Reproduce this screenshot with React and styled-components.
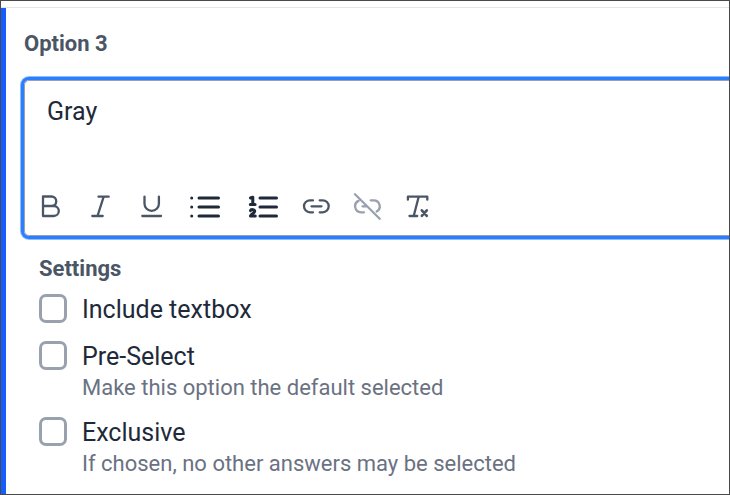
import React, { useState } from "react";
import styled, { createGlobalStyle } from "styled-components";

const settings = [
  { id: "textbox", title: "Include textbox" },
  {
    id: "preselect",
    title: "Pre-Select",
    hint: "Make this option the default selected",
  },
  {
    id: "exclusive",
    title: "Exclusive",
    hint: "If chosen, no other answers may be selected",
  },
];

const tools = [
  {
    label: "Bold",
    icon: (
      <path d="M9 4.5h8.5a4.7 4.7 0 0 1 0 9.5H9M17.5 14h2.3a5 5 0 0 1 0 10H9V4.5" />
    ),
  },
  {
    label: "Italic",
    icon: <path d="M13.5 4.7h10.2M7.3 24h10.4M18.7 4.7L12.5 24" />,
  },
  {
    label: "Underline",
    icon: <path d="M8.5 4.7v7a7.2 7.2 0 0 0 14.4 0v-7M6.3 24h18.7" />,
  },
  {
    label: "Bulleted list",
    wide: true,
    icon: (
      <path
        strokeWidth="3"
        d="M12 6h19.5M12 15h19.5M12 24h19.5M4.7 6h0M4.7 15h0M4.7 24h0"
      />
    ),
  },
  {
    label: "Numbered list",
    wide: true,
    icon: (
      <>
        <path strokeWidth="3" d="M16 6h16.5M16 15h16.5M16 24h16.5" />
        <path
          d="M6.5 6l2.3-.8v7M6.3 12.5h4.8M6.5 18.7c.4-1.6 4.4-1.4 4.2.6-.2 1.7-3.6 2.5-4.2 4.7h4.8"
          strokeWidth="3"
        />
      </>
    ),
  },
  {
    label: "Insert link",
    icon: (
      <path d="M12 8.3H9a6 6 0 0 0 0 12h3M18.7 8.3h3a6 6 0 0 1 0 12h-3M10.5 14.3h10" />
    ),
  },
  {
    label: "Remove link",
    disabled: true,
    icon: (
      <path d="M3 2.3L27.7 26.8M6.5 8.9a6 6 0 0 0 2.5 11.4h3M18.7 8.3h3a6 6 0 0 1 3 11.2M10.5 14.3h4" />
    ),
  },
  {
    label: "Clear formatting",
    icon: (
      <>
        <path d="M4.9 7.7V4.7h19.4v3M15.7 4.7L10.7 24M6.5 24h7.7" />
        <path
          d="M18.8 18.3l5 5.5M23.8 18.3l-5 5.5"
          strokeWidth="2.6"
        />
      </>
    ),
  },
];

const App = () => {
  const [text, setText] = useState("Gray");

  return (
    <Frame>
      <GlobalStyle />
      <Card>
        <Panel>
          <Label htmlFor="option-text">Option 3</Label>
          <Editor>
            <TextArea
              id="option-text"
              value={text}
              onChange={(e) => setText(e.target.value)}
            />
            <Toolbar>
              {tools.map((tool) => (
                <Tool
                  key={tool.label}
                  type="button"
                  aria-label={tool.label}
                  disabled={tool.disabled}
                  $wide={tool.wide}
                >
                  <svg
                    width={tool.wide ? 36 : 30}
                    height="30"
                    fill="none"
                    stroke="currentColor"
                    strokeWidth="2.3"
                    strokeLinecap="round"
                    strokeLinejoin="round"
                  >
                    {tool.icon}
                  </svg>
                </Tool>
              ))}
            </Toolbar>
          </Editor>
          <Settings>
            <Legend>Settings</Legend>
            <Options>
              {settings.map(({ id, title, hint }) => (
                <Option key={id} htmlFor={id}>
                  <Checkbox id={id} type="checkbox" />
                  <span>
                    <Title>{title}</Title>
                    {hint && <Hint>{hint}</Hint>}
                  </span>
                </Option>
              ))}
            </Options>
          </Settings>
        </Panel>
      </Card>
    </Frame>
  );
};

export default App;

const GlobalStyle = createGlobalStyle`
  * {
    box-sizing: border-box;
  }
  body {
    margin: 0;
    background: #fff;
    font-family: Roboto, sans-serif;
  }
`;

const Frame = styled.div`
  display: flex;
  flex-direction: column;
  min-height: 100vh;
  padding-top: 6px;
  border: 1px solid #4a4a4a;
  overflow: hidden;
`;

const Card = styled.div`
  display: flex;
  flex: 1;
  border-top: 1px solid #e5e5e5;
`;

const Panel = styled.div`
  flex: 1;
  padding: 22px 0 8px 18px;
  border-left: 5px solid #155dfc;
`;

const Label = styled.label`
  display: block;
  font-size: 22px;
  font-weight: 700;
  line-height: 28px;
  color: #4a5565;
`;

const Editor = styled.div`
  margin-top: 22px;
  margin-right: -16px;
  border: 1px solid #99a1af;
  border-radius: 5px;
  box-shadow: 0 0 0 3px #2b7fff, 0 0 0 4px #8fbcff;
`;

const TextArea = styled.textarea`
  display: block;
  width: 100%;
  height: 104px;
  padding: 14px 22px;
  border: 0;
  outline: 0;
  resize: none;
  background: transparent;
  font-family: inherit;
  font-size: 25px;
  line-height: 33px;
  color: #1e2939;
`;

const Toolbar = styled.div`
  display: flex;
  gap: 21px;
  padding: 7px 9px 13px;
`;

const Tool = styled.button`
  display: flex;
  padding: 0;
  border: 0;
  background: none;
  color: ${({ $wide }) => ($wide ? "#1e2939" : "#4a5565")};
  cursor: pointer;

  &:disabled {
    color: #99a1af;
    cursor: default;
  }
`;

const Settings = styled.fieldset`
  margin: 0;
  padding: 19px 0 0 15px;
  border: 0;
`;

const Legend = styled.legend`
  float: left;
  padding: 0;
  font-size: 22px;
  font-weight: 700;
  line-height: 28px;
  color: #4a5565;
`;

const Options = styled.div`
  clear: both;
  display: flex;
  flex-direction: column;
  gap: 12px;
  padding-top: 8px;
`;

const Option = styled.label`
  display: flex;
  gap: 15px;
`;

const Checkbox = styled.input`
  appearance: none;
  flex: none;
  width: 28px;
  height: 29px;
  margin: 3px 0 0;
  border: 3px solid #99a1af;
  border-radius: 7px;
  background: #fff;

  &:checked {
    border-color: #155dfc;
    background: #155dfc;
  }
`;

const Title = styled.span`
  display: block;
  padding-top: 2px;
  font-size: 25px;
  line-height: 33px;
  color: #1e2939;
`;

const Hint = styled.span`
  display: block;
  font-size: 22px;
  line-height: 29px;
  color: #6a7282;
`;
